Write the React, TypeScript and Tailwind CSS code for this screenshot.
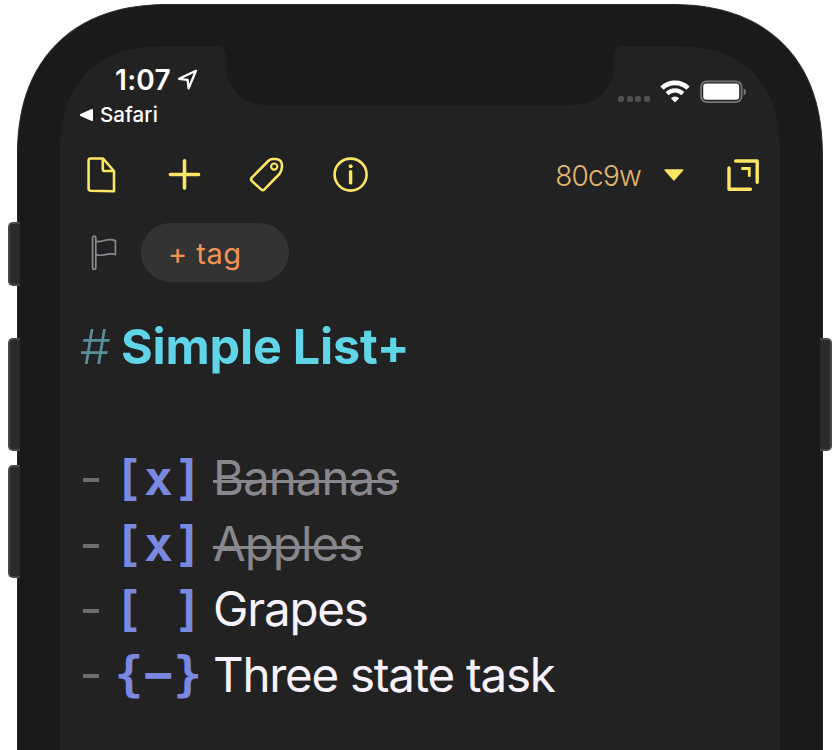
import React from "react";

const FileIcon = () => (
  <svg width="32" height="38" viewBox="0 0 32 38" fill="none" stroke="#fde664" strokeWidth="2.6" strokeLinejoin="round">
    <path d="M4.5 2.5H17L28 15V35.3L4.5 34.7Q2.6 34.6 2.6 32.6V4.4Q2.6 2.5 4.5 2.5Z" />
    <path d="M16.8 3V13.2Q16.8 15 18.6 15H27.6" />
  </svg>
);

const PlusIcon = () => (
  <svg width="34" height="34" viewBox="0 0 34 34" stroke="#fde664" strokeWidth="3.6" strokeLinecap="round">
    <path d="M16.5 2.9V30.1M2.4 16.5H30.6" />
  </svg>
);

const TagIcon = () => (
  <svg width="36" height="36" viewBox="0 0 36 36" fill="none" stroke="#fde664" strokeWidth="2.6" strokeLinejoin="round">
    <path d="M19.2 4Q21 2.3 23.4 2H27Q33.4 2.4 33 9.5Q32.8 14 30.4 17L15.4 32.4Q13.8 34 12.1 32.4L2.8 24Q1.2 22.3 2.8 20.6Z" />
    <circle cx="25.2" cy="9.6" r="3.1" strokeWidth="2.2" />
  </svg>
);

const InfoIcon = () => (
  <svg width="36" height="36" viewBox="0 0 36 36" fill="none" stroke="#fde664">
    <circle cx="17.6" cy="17.6" r="16" strokeWidth="2.6" />
    <circle cx="17.6" cy="9.2" r="2" fill="#fde664" stroke="none" />
    <path d="M17.6 14.6V25.9" strokeWidth="3.4" strokeLinecap="round" />
  </svg>
);

const ExpandIcon = () => (
  <svg width="34" height="34" viewBox="0 0 34 34" fill="none" stroke="#fde664" strokeWidth="3.4" strokeLinecap="round" strokeLinejoin="round">
    <path d="M9.7 3H31.2V24.3M3 10V31.2H24.4" />
    <path d="M15.3 10.5H23.3V18.7" strokeWidth="2.8" strokeLinecap="butt" strokeLinejoin="miter" />
  </svg>
);

const FlagIcon = () => (
  <svg width="28" height="38" viewBox="0 0 28 38" fill="none" stroke="#8b8891" strokeWidth="1.7" strokeLinejoin="round">
    <path d="M2.6 4.1Q2.6 2.2 4.2 2.2Q5.8 2.2 5.8 4.1V33.6Q5.8 35.4 4.2 35.4Q2.6 35.4 2.6 33.6Z" />
    <path d="M5.8 7C11 9.8 17 2.8 25.4 6.8V20.6C18 17.4 12 24 5.8 20.2" />
  </svg>
);

const LocationIcon = () => (
  <svg width="22" height="22" viewBox="0 0 22 22" fill="none" stroke="#fff" strokeWidth="2.3" strokeLinejoin="round">
    <path d="M19 1.8L2 9.8L10.6 10.8L11.6 19.4Z" />
  </svg>
);

const WifiIcon = () => (
  <svg width="30" height="23" viewBox="0 0 30 23" fill="none" stroke="#fff" strokeWidth="4.8">
    <path d="M2 8.1A18.6 18.6 0 0 1 28 8.1" />
    <path d="M7.1 13.6A11.4 11.4 0 0 1 22.9 13.6" strokeWidth="4.3" />
    <path d="M15 22.4L10.9 18.3Q15 14.6 19.1 18.3Z" fill="#fff" stroke="none" />
  </svg>
);

const BatteryIcon = () => (
  <svg width="47" height="24" viewBox="0 0 47 24" fill="none">
    <rect x="1" y="1.3" width="40.6" height="20.8" rx="5.8" stroke="#77777a" strokeWidth="1.8" />
    <rect x="3.2" y="3.6" width="36" height="16.2" rx="3.2" fill="#fff" />
    <path d="M43.6 8.2Q46 9.4 46 11.8Q46 14.2 43.6 15.4Z" fill="#77777a" />
  </svg>
);

const Notch = () => (
  <svg className="absolute left-[150px] top-0" width="420" height="60" viewBox="0 0 420 60" fill="#1a1a1a">
    <path d="M0 0H6Q16 0 16 11V18C16 44 34 59 57 59H363C386 59 404 44 404 18V11Q404 0 414 0H420V-2H0Z" />
  </svg>
);

const items = [
  { box: "[x]", label: "Bananas", done: true, spacing: "tracking-[-1px]" },
  { box: "[x]", label: "Apples", done: true, spacing: "tracking-[-1px]" },
  { box: "[ ]", label: "Grapes", done: false, spacing: "tracking-[-1.2px]" },
  { box: "{−}", label: "Three state task", done: false, spacing: "tracking-[-1.27px]" },
];

function SideButton({ className }: { className: string }) {
  return <div className={"absolute w-[12px] border-2 border-[#474747] bg-[#2b2b2b] " + className} />;
}

export default function App() {
  return (
    <div className="relative h-[750px] w-[840px] overflow-hidden bg-white font-['Inter',sans-serif]">
      <main className="ml-[17px] mt-1 h-[760px] w-[806px] rounded-t-[152px] border border-[#2c2c2c] bg-[#1a1a1a] px-[42px] pt-[41px] [corner-shape:superellipse(1.2)]">
        <div className="relative h-full w-[720px] overflow-hidden rounded-t-[108px] bg-[#222222] [corner-shape:superellipse(1.3)]">
          <Notch />
          <header className="flex h-[98px] justify-between pl-[19px] pr-[33px] text-white">
            <div className="pt-[18px]">
              <div className="flex h-[31px] items-center pl-[36px]">
                <span className="w-[62px] whitespace-nowrap text-[28px] font-semibold tracking-[0.3px]">1:07</span>
                <LocationIcon />
              </div>
              <div className="mt-[5px] flex h-[30px] items-center gap-[7px]">
                <svg width="14" height="14" viewBox="0 0 14 14" fill="#fff">
                  <path d="M12.2 1.2Q14 .4 14 2V12Q14 13.6 12.2 12.8L1.4 8Q0 7 1.4 6Z" />
                </svg>
                <span className="whitespace-nowrap text-[20.5px] font-medium tracking-[0.1px]">Safari</span>
              </div>
            </div>
            <div className="flex pt-[34px]">
              <div className="mr-[10px] mt-[16px] flex gap-[2.6px]">
                <i className="size-[6px] rounded-[2px] bg-[#505050]" />
                <i className="size-[6px] rounded-[2px] bg-[#505050]" />
                <i className="size-[6px] rounded-[2px] bg-[#505050]" />
                <i className="size-[6px] rounded-[2px] bg-[#505050]" />
              </div>
              <WifiIcon />
              <span className="w-[10px]" />
              <BatteryIcon />
            </div>
          </header>

          <nav className="flex h-[62px] items-center pl-[26px] pr-[20px]">
            <FileIcon />
            <span className="ml-[50px]"><PlusIcon /></span>
            <span className="ml-[47px]"><TagIcon /></span>
            <span className="ml-[48px]"><InfoIcon /></span>
            <span className="ml-auto whitespace-nowrap pt-[2px] text-[28px] font-[350] tracking-[-0.8px] text-[#e3b76f]">80c9w</span>
            <svg className="ml-[23px]" width="20" height="12" viewBox="0 0 20 12" fill="#fde664">
              <path d="M1 .3H18.8Q19.8.6 19.2 1.4L10.8 11Q9.9 12 9 11L.6 1.4Q0 .6 1 .3Z" />
            </svg>
            <span className="ml-[42px]"><ExpandIcon /></span>
          </nav>

          <section className="mt-[17px] flex h-[59px] items-center pl-[30px]">
            <FlagIcon />
            <button className="ml-[23px] flex h-[59px] w-[148px] items-center rounded-full bg-[#333333] pl-[27px] pt-[2px] text-[29px] font-normal text-[#f59353]">
              <span className="whitespace-nowrap tracking-[0.5px]">+ tag</span>
            </button>
          </section>

          <article className="pl-[20px]">
            <h1 className="mt-[33px] flex h-[65px] items-center whitespace-nowrap text-[48.5px] leading-none">
              <span className="w-[41px] font-light text-[#568f99]">#</span>
              <span className="font-bold tracking-[-0.2px] text-[#5fd5e7]">Simple List+</span>
            </h1>
            <ul className="mt-[65.5px]">
              {items.map((item) => (
                <li key={item.label} className="flex h-[65.4px] items-center text-[47.5px] leading-none">
                  <span className="ml-[3px] mr-[15.5px] mt-[4px] h-[4px] w-[16px] shrink-0 bg-[#6d6c70]" />
                  <span className="w-[98.5px] shrink-0 whitespace-pre font-['DejaVu_Sans_Mono',monospace] text-[48px] font-bold tracking-[0.5px] text-[#7b88e0]">
                    {item.box}
                  </span>
                  <span
                    className={
                      "relative whitespace-nowrap " + item.spacing + (item.done ? " text-[#89868d]" : " text-[#f8f2ff]")
                    }
                  >
                    {item.label}
                    {item.done && <i className="absolute -right-px left-0 top-[26px] h-[3px] bg-[#89868d]" />}
                  </span>
                </li>
              ))}
            </ul>
          </article>
        </div>
      </main>

      <SideButton className="left-[8px] top-[222px] h-[64px] rounded-l-[5px] border-r-0" />
      <SideButton className="left-[8px] top-[338px] h-[113px] rounded-l-[5px] border-r-0" />
      <SideButton className="left-[8px] top-[465px] h-[113px] rounded-l-[5px] border-r-0" />
      <SideButton className="left-[820px] top-[338px] h-[113px] rounded-r-[5px] border-l-0" />
    </div>
  );
}
